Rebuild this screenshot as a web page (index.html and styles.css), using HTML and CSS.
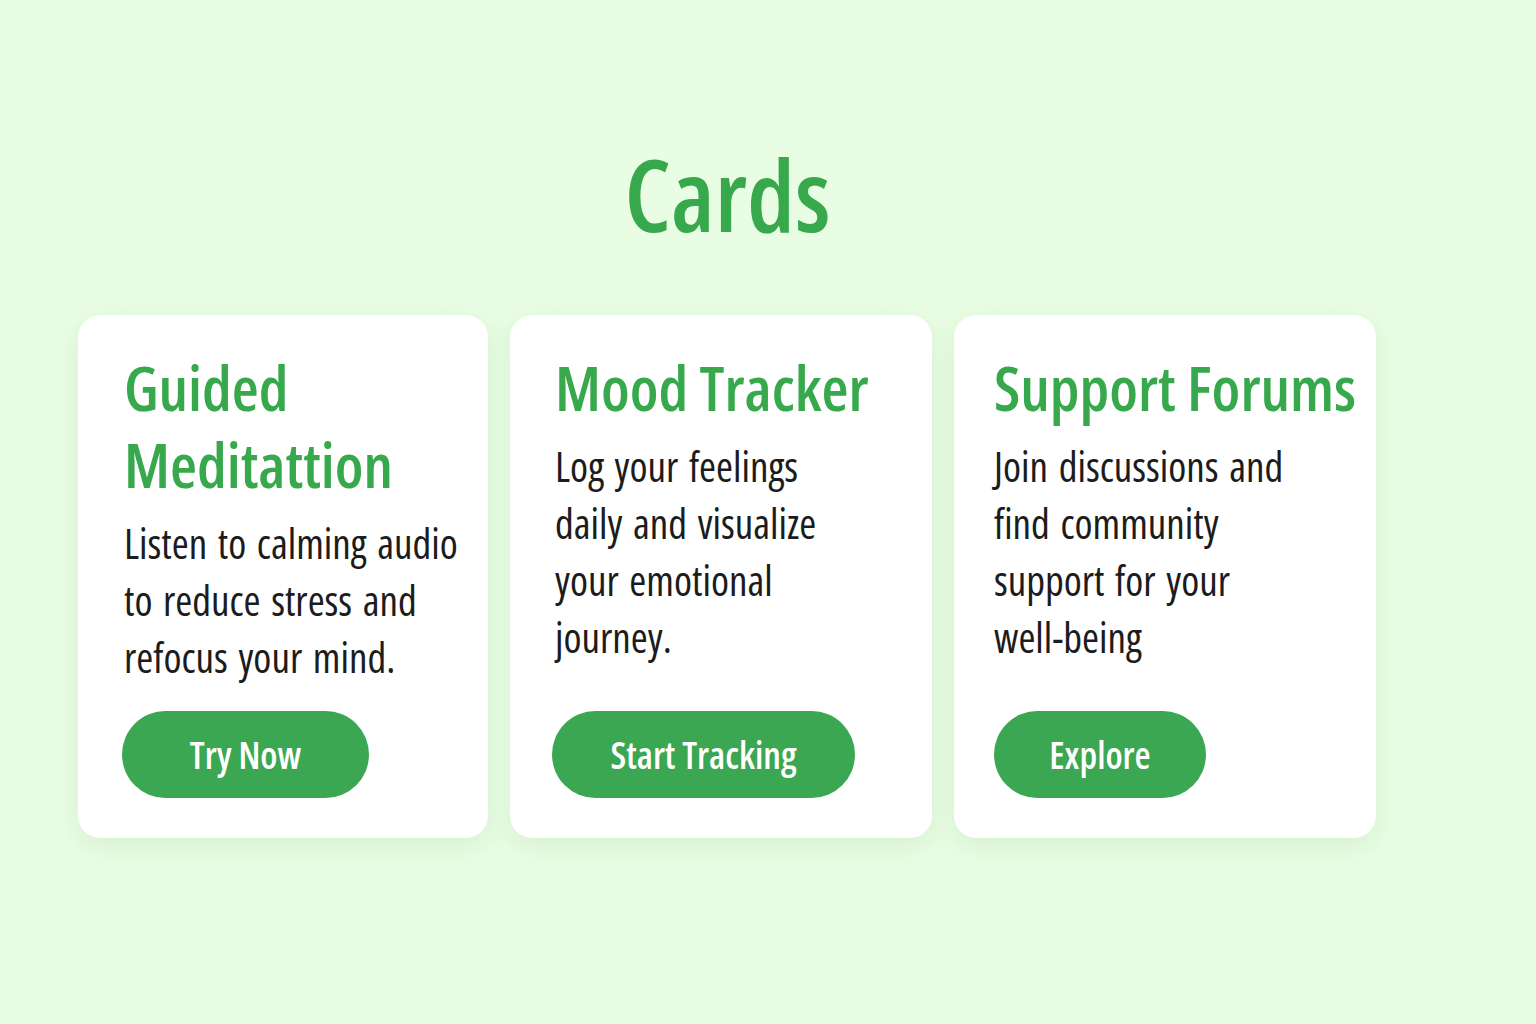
FILE: index.html
```html
<!DOCTYPE html>
<html lang="en">
<head>
<meta charset="utf-8">
<title>Cards</title>
<link rel="stylesheet" href="styles.css">
</head>
<body>
<main class="page">
  <h1 class="title">Cards</h1>
  <section class="cards">
    <article class="card card-first">
      <h2 class="card-title">Guided<br>Meditattion</h2>
      <p class="card-text">Listen to calming audio<br>to reduce stress and<br>refocus your mind.</p>
      <a class="btn btn-try" href="#">Try Now</a>
    </article>
    <article class="card card-second">
      <h2 class="card-title">Mood Tracker</h2>
      <p class="card-text">Log your feelings<br>daily and visualize<br>your emotional<br>journey.</p>
      <a class="btn btn-track" href="#">Start Tracking</a>
    </article>
    <article class="card card-third">
      <h2 class="card-title">Support Forums</h2>
      <p class="card-text">Join discussions and<br>find community<br>support for your<br>well-being</p>
      <a class="btn btn-explore" href="#">Explore</a>
    </article>
  </section>
</main>
</body>
</html>
```
FILE: styles.css
```css
html, body {
  margin: 0;
  padding: 0;
}
body {
  background: #e9fde4;
  font-family: "Open Sans", "DejaVu Sans Condensed", sans-serif;
  font-stretch: 75%;
  color: #1c1c1c;
  min-height: 1024px;
}
.page {
  width: 1299px;
  padding: 143px 0 0 78px;
}
.title {
  margin: 0 0 72px;
  text-align: center;
  font-size: 100px;
  line-height: 100px;
  font-weight: 600;
  color: #37a84c;
}
.cards {
  display: grid;
  grid-template-columns: 410px 422px 422px;
  column-gap: 22px;
}
.card {
  background: #ffffff;
  border-radius: 22px;
  box-shadow: 0 8px 26px rgba(70, 150, 70, 0.12);
  display: flex;
  flex-direction: column;
  align-items: flex-start;
  padding: 34px 20px 40px 46px;
}
.card-second { padding-left: 45px; }
.card-third { padding-left: 40px; }
.card-title {
  margin: 0 0 12px;
  font-size: 62px;
  line-height: 77px;
  font-weight: 600;
  color: #37a84c;
  white-space: nowrap;
}
.card-text {
  margin: 0 0 25px;
  font-size: 41px;
  line-height: 57px;
  font-weight: 400;
  word-spacing: 3px;
  color: #1c1c1c;
  white-space: nowrap;
}
.btn {
  margin-top: auto;
  height: 87px;
  border-radius: 44px;
  background: #3ba752;
  color: #ffffff;
  text-decoration: none;
  font-size: 37px;
  font-weight: 600;
  line-height: 87px;
  text-align: center;
  display: block;
}
.btn-try { width: 247px; margin-left: -2px; }
.btn-track { width: 303px; margin-left: -3px; }
.btn-explore { width: 212px; }
```
